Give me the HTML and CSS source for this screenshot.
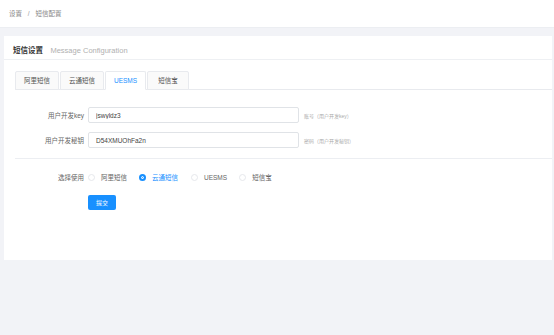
FILE: index.html
```html
<!DOCTYPE html>
<html lang="zh">
<head>
  <meta charset="UTF-8">
  <meta name="viewport" content="width=device-width, initial-scale=1.0">
  <title>短信配置</title>
  <link rel="stylesheet" href="styles.css">
</head>
<body>

  <!-- 顶部面包屑 -->
  <div class="topbar">
    <span>设置</span>
    <span class="sep">/</span>
    <span>短信配置</span>
  </div>

  <div class="main">
    <div class="card">
      <div class="card-head">
        <span class="card-title">短信设置</span>
        <span class="card-sub">Message Configuration</span>
      </div>

      <div class="card-body">
        <div class="tabs">
          <div class="tab">阿里短信</div>
          <div class="tab">云通短信</div>
          <div class="tab active">UESMS</div>
          <div class="tab wide">短信宝</div>
        </div>

        <form class="form">
          <div class="row">
            <label class="label">用户开发key</label>
            <input class="input" type="text" value="jswyldz3">
            <span class="hint">账号（用户开发key）</span>
          </div>
          <div class="row">
            <label class="label">用户开发秘钥</label>
            <input class="input" type="text" value="D54XMUOhFa2n">
            <span class="hint">密码（用户开发秘钥）</span>
          </div>

          <div class="divider"></div>

          <div class="row radio-row">
            <label class="label">选择使用</label>
            <label class="radio"><span class="dot"></span>阿里短信</label>
            <label class="radio checked"><span class="dot"></span>云通短信</label>
            <label class="radio"><span class="dot"></span>UESMS</label>
            <label class="radio"><span class="dot"></span>短信宝</label>
          </div>

          <div class="row">
            <span class="label"></span>
            <button type="button" class="btn">提交</button>
          </div>
        </form>
      </div>
    </div>
  </div>

</body>
</html>
```

FILE: styles.css
```css
* {
  box-sizing: border-box;
}

body {
  margin: 0;
  font-family: "Liberation Sans", "Noto Sans CJK SC", sans-serif;
  background: #f2f3f7;
  color: #333;
}

.topbar {
  height: 28px;
  line-height: 27px;
  padding-left: 9px;
  background: #fff;
  border-bottom: 1px solid #eceef2;
  font-size: 6.5px;
  color: #888;
}

.topbar .sep {
  margin: 0 4px;
  color: #999;
}

.main {
  padding: 8px 2px 0 4px;
}

.card {
  background: #fff;
  height: 224px;
}

.card-head {
  height: 24px;
  line-height: 24px;
  padding-left: 9px;
  border-bottom: 1px solid #eef0f3;
}

.card-title {
  font-size: 7.5px;
  font-weight: bold;
  color: #333;
}

.card-sub {
  font-size: 7.5px;
  color: #b0b0b0;
  margin-left: 3px;
}

.card-body {
  padding: 11px 0 0 11px;
}

/* Tabs */
.tabs {
  display: flex;
  height: 19px;
  border-bottom: 1px solid #e8eaee;
}

.tab {
  height: 19px;
  line-height: 18px;
  padding: 0 8px;
  font-size: 6.5px;
  color: #555;
  background: #fafafa;
  border: 1px solid #e8eaee;
  border-radius: 2px 2px 0 0;
  margin-right: 1px;
}

.tab.wide {
  padding: 0 10px;
}

.tab.active {
  background: #fff;
  color: #1890ff;
  border-bottom-color: #fff;
}

/* Form */
.form {
  padding-top: 17px;
}

.row {
  display: flex;
  align-items: center;
  margin-bottom: 9px;
}

.label {
  width: 69px;
  text-align: right;
  font-size: 6.5px;
  color: #666;
  margin-right: 4px;
}

.input {
  width: 211px;
  height: 16px;
  padding: 0 7px;
  border: 1px solid #e0e3e7;
  border-radius: 2px;
  font-family: "Liberation Sans", sans-serif;
  font-size: 6.5px;
  color: #444;
  outline: none;
}

.hint {
  margin-left: 5px;
  font-size: 5px;
  color: #aaa;
}

.divider {
  height: 1px;
  background: #eceef2;
  margin: 10px 0 11px 0;
}

.radio-row {
  height: 14px;
  margin-bottom: 11px;
}

.radio {
  display: flex;
  align-items: center;
  font-size: 6.5px;
  color: #666;
  margin-right: 12px;
}

.radio .dot {
  width: 7px;
  height: 7px;
  border: 1px solid #e6e8ec;
  border-radius: 50%;
  margin-right: 6px;
  background: #fff;
}

.radio.checked {
  color: #1890ff;
  margin-right: 13px;
}

.radio.checked .dot {
  border: 2px solid #1890ff;
  box-shadow: inset 0 0 0 1px #fff;
  background: #1890ff;
}

.btn {
  width: 28px;
  height: 15px;
  padding: 0;
  border: none;
  border-radius: 2px;
  background: #1890ff;
  color: #fff;
  font-family: "Noto Sans CJK SC", sans-serif;
  font-size: 6px;
  cursor: pointer;
}
```
